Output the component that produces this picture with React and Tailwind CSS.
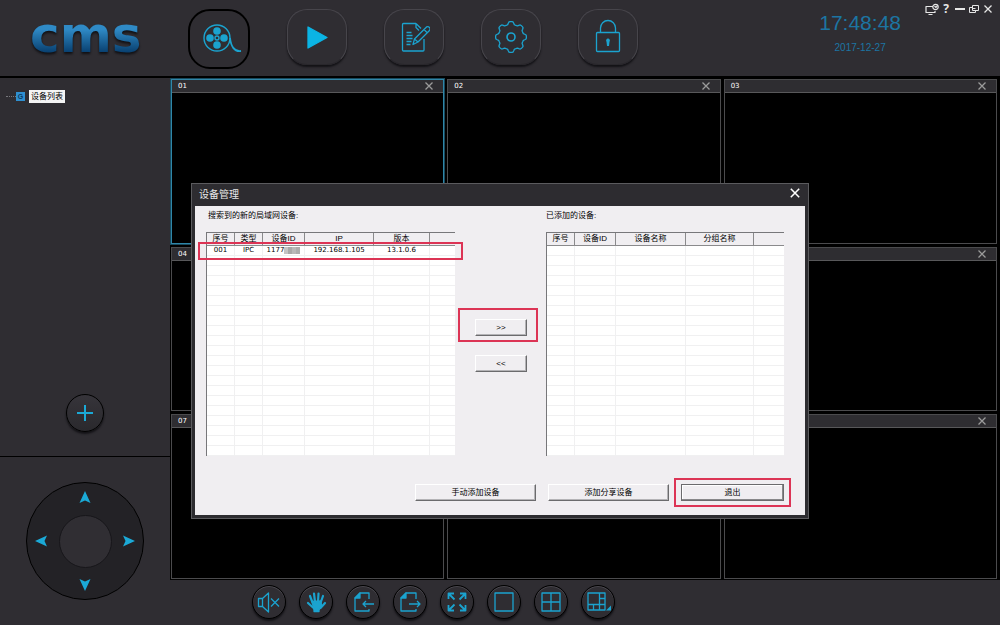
import React, { useState } from "react";

const cameras = ["01", "02", "03", "04", "05", "06", "07", "08", "09"];

const foundDevices = [
  { no: "001", type: "IPC", id: "1177", ip: "192.168.1.105", version: "13.1.0.6" },
];

const ROWS = 21;

const Svg = ({ className, box = "0 0 32 32", sw = 1.3, children }) => (
  <svg
    className={className}
    viewBox={box}
    fill="none"
    stroke="currentColor"
    strokeWidth={sw}
    strokeLinejoin="round"
    aria-hidden="true"
  >
    {children}
  </svg>
);

const Cross = ({ className }) => (
  <Svg className={className} box="0 0 10 10" sw={1.3}>
    <path d="M1.5 1.5l7 7M8.5 1.5l-7 7" />
  </Svg>
);

const FilmIcon = () => (
  <Svg className="size-10 overflow-visible" box="0 0 40 40" sw={1.4}>
    <circle cx="18" cy="19" r="13" />
    <circle cx="18" cy="19" r="2" />
    <g fill="currentColor" stroke="none">
      <circle cx="18" cy="12" r="3.8" />
      <circle cx="18" cy="26" r="3.8" />
      <circle cx="11" cy="19" r="3.8" />
      <circle cx="25" cy="19" r="3.8" />
    </g>
    <path d="M31 19c1 8 4 14 11 13" strokeWidth="1.8" />
  </Svg>
);

const PlayIcon = () => (
  <Svg className="size-8">
    <path d="M7 6v21l19-10.5z" fill="#0bb4e4" stroke="#0bb4e4" />
  </Svg>
);

const NoteIcon = () => (
  <Svg className="size-8">
    <path d="M18 2.5H5.5a1 1 0 0 0-1 1V29a1 1 0 0 0 1 1H25a1 1 0 0 0 1-1V18M18 2.5l5 5M18 2.5v4l3 3" />
    <path d="M8.5 11.5h5M8.5 14.5h6M8.5 17.5h6M8.5 20.5h5M8.5 23.5h4" />
    <path d="M28 6.5a2.2 2.2 0 0 1 3.5 3L20 21l-5 2.5L16.5 18zM26 8.500l3.5 3.5M17 18.5l3 2.5" />
  </Svg>
);

const GearIcon = () => {
  // eight round lobes joined by shallow notches
  let d = "";
  for (let i = 0; i <= 96; i++) {
    const a = (i / 96) * Math.PI * 2;
    const r = 14 + 1.4 * Math.tanh(2.5 * Math.cos(8 * a));
    d += `${i ? "L" : "M"}${(16 + r * Math.cos(a)).toFixed(2)} ${(16 + r * Math.sin(a)).toFixed(2)}`;
  }
  return (
    <Svg className="size-8">
      <path d={d + "z"} />
      <circle cx="16" cy="16" r="4" strokeWidth="1.6" />
    </Svg>
  );
};

const LockIcon = () => (
  <Svg className="size-9" box="0 0 36 36">
    <rect x="6.5" y="13.5" width="23" height="19" rx="1" />
    <path d="M10.5 13.5V9a7.5 7.5 0 0 1 15 0v4.5" />
    <path d="M18 19.5a2 2 0 0 1 1.5 3.2L19 27h-2l-.5-4.300A2 2 0 0 1 18 19.5z" fill="currentColor" stroke="none" />
  </Svg>
);

const navItems = [
  { label: "Preview", icon: <FilmIcon /> },
  { label: "Playback", icon: <PlayIcon /> },
  { label: "Log", icon: <NoteIcon /> },
  { label: "Settings", icon: <GearIcon /> },
  { label: "Lock", icon: <LockIcon /> },
];

const tools = [
  {
    label: "Mute",
    icon: (
      <>
        <path d="M1.5 8.5h4v8h-4zM5.5 8.5l6-5.5v19l-6-5.5" />
        <path d="M14 8.5l8 8M22 8.5l-8 8" />
      </>
    ),
  },
  {
    label: "Talk",
    icon: (
      <g strokeLinecap="round">
        <path d="M8 11.5l9-.5.5 5-2.5 4v1.5h-5V20z" fill="currentColor" />
        <path
          d="M8.500 12.5L6 6M11 12l-1-8.5M14 12l.5-8.5M16.5 13L19 6M9 17.5L4 13M16.5 18l4.5-5"
          strokeWidth="2.2"
        />
      </g>
    ),
  },
  {
    label: "Import",
    icon: (
      <>
        <path d="M18 9V3H9L4 8v13h14v-2" />
        <path d="M4 8l5-5v5z" fill="currentColor" />
        <path d="M23 14H12M15 11l-3 3 3 3" />
      </>
    ),
  },
  {
    label: "Export",
    icon: (
      <>
        <path d="M18 9V3H8L3 8v13h15v-2" />
        <path d="M3 8l5-5v5z" fill="currentColor" />
        <path d="M11 14h11M19 11l3 3-3 3" />
      </>
    ),
  },
  {
    label: "Full screen",
    icon: (
      <path
        d="M3.5 9V3.5H9M3.5 3.5l6 6M20.5 9V3.5H15M20.5 3.5l-6 6M3.5 15v5.5H9M3.5 20.5l6-6M20.5 15v5.5H15M20.5 20.5l-6-6"
        strokeWidth="1.8"
      />
    ),
  },
  { label: "One view", icon: <rect x="3" y="3" width="18" height="18" /> },
  { label: "Four views", icon: <path d="M3 3h18v18H3zM12 3v18M3 12h18" /> },
  {
    label: "More views",
    icon: (
      <>
        <path d="M2 3h17v17H2zM13.5 3v17M2 14.5h17M13.5 8.5H19M7.5 14.5V20" />
        <path d="M25 15.5v5h-5z" fill="currentColor" stroke="none" />
      </>
    ),
  },
];

const Header = () => (
  <header className="flex h-[78px] shrink-0 items-start border-b-2 border-black">
    <div className="w-[188px] shrink-0 pt-[7px] pl-[30px]">
      <h1 className="bg-linear-to-b from-[#2f8ac6] from-40% to-[#0a4272] to-80% bg-clip-text font-['DejaVu_Sans'] text-[50px] leading-[56px] font-bold text-transparent drop-shadow-[0_2px_1px_#101014]">
        cms
      </h1>
    </div>
    <nav className="flex gap-[37px] pt-[9px]">
      {navItems.map((item, i) => (
        <button
          key={item.label}
          aria-label={item.label}
          className={
            i === 0
              ? "flex h-[60px] w-[62px] items-center justify-center rounded-[22px] border-2 border-black text-[#1ba3cf]"
              : "flex h-14 w-[60px] items-center justify-center rounded-[20px] border border-[#47454b] border-b-[#29272c] text-[#1ba3cf] shadow-[0_2px_2px_#131216]"
          }
        >
          {item.icon}
        </button>
      ))}
    </nav>
    <div className="ml-auto flex items-start pr-[5px]">
      <div className="mr-6 pt-3 text-center text-[#1c75a3]">
        <div className="text-[21px] leading-[22px]">17:48:48</div>
        <div className="mt-2 text-[10px] leading-3">2017-12-27</div>
      </div>
      <div className="flex pt-[3px] text-[#e6e6e6]">
        <button aria-label="Display" className="flex h-3 w-[14px] items-center justify-center">
          <Svg className="h-3 w-[14px]" box="0 0 14 12" sw={1.2}>
            <path d="M8 3.5H1v6h9V8M3.5 11.5h4" />
            <circle cx="10.5" cy="4" r="2.7" />
            <path d="M9.5 3l1.5 1.5 1.5-2" />
          </Svg>
        </button>
        <button aria-label="Help" className="h-3 w-[14px] font-['Noto_Sans'] text-xs leading-3 font-bold">
          ?
        </button>
        <button aria-label="Minimize" className="flex h-3 w-[14px] items-center justify-center">
          <span className="h-0.5 w-2.5 bg-[#e6e6e6]" />
        </button>
        <button aria-label="Restore" className="flex h-3 w-[14px] items-center justify-center">
          <Svg className="size-2.5" box="0 0 10 10" sw={1}>
            <path d="M3.5 1.5h6v5h-6zM3.5 3.5h-3v5h6v-2M3.5 4.5h3" />
          </Svg>
        </button>
        <button aria-label="Close" className="flex h-3 w-[14px] items-center justify-center">
          <Cross className="size-2.5" />
        </button>
      </div>
    </div>
  </header>
);

const Arrow = ({ label, className }) => (
  <button aria-label={label} className={className}>
    <svg className="size-3" viewBox="0 0 12 12" fill="#1ba9d6" aria-hidden="true">
      <path d="M6 0l5.5 12L6 9.5.5 12z" />
    </svg>
  </button>
);

const Sidebar = () => (
  <aside className="flex w-[170px] shrink-0 flex-col">
    <div className="flex flex-1 flex-col justify-between border-b border-black pt-3 pb-6">
      <div className="flex items-center pl-1.5">
        <span className="w-2.5 border-t border-dotted border-[#77777c]" />
        <span className="flex size-[9px] items-center justify-center bg-[#2f8fd0] text-[7px] leading-none font-bold text-[#0c3960]">
          G
        </span>
        <span className="ml-1 bg-[#f4f4f4] px-0.5 text-[8px] leading-[13px] text-black">
          设备列表
        </span>
      </div>
      <button
        aria-label="Add"
        className="mx-auto flex size-[38px] items-center justify-center rounded-full border border-black bg-linear-to-b from-[#36343a] to-[#2a292d] text-[#1ba9d6] shadow-[0_2px_2px_#131216]"
      >
        <Svg className="size-4" box="0 0 16 16" sw={2}>
          <path d="M8 0v16M0 8h16" />
        </Svg>
      </button>
    </div>
    <div className="flex h-[168px] justify-center pt-[25px]">
      <div className="grid size-[118px] grid-cols-[28px_1fr_28px] grid-rows-[28px_1fr_28px] place-items-center rounded-full border border-black bg-[#232226]">
        <Arrow label="Up" className="col-start-2" />
        <Arrow label="Left" className="col-start-1 row-start-2 -rotate-90" />
        <span className="col-start-2 row-start-2 size-[53px] rounded-full border border-[#17161a] bg-[#302e33]" />
        <Arrow label="Right" className="col-start-3 row-start-2 rotate-90" />
        <Arrow label="Down" className="col-start-2 row-start-3 rotate-180" />
      </div>
    </div>
  </aside>
);

const Camera = ({ no, active, onSelect }) => (
  <section
    onClick={onSelect}
    className={
      active
        ? "border border-[#2f86a8] bg-black shadow-[0_0_0_1px_#184a5e]"
        : "border border-[#4b4b4d] bg-black"
    }
  >
    <div className="flex h-[13px] items-center justify-between border-b border-[#58585a] bg-[#2e2d31] pr-[9px] pl-1.5">
      <span className="font-['DejaVu_Sans'] text-[7px] leading-3 text-white">{no}</span>
      <button aria-label={`Close ${no}`} className="text-[#9b9b9b]">
        <Cross className="size-2.5" />
      </button>
    </div>
  </section>
);

const Toolbar = () => (
  <footer className="flex h-[45px] shrink-0 items-start gap-[13px] pt-[5px] pl-[82px]">
    {tools.map((tool) => (
      <button
        key={tool.label}
        aria-label={tool.label}
        className="flex size-[34px] items-center justify-center rounded-full border border-black bg-[#2f2d32] text-[#1ba3cf] shadow-[0_2px_2px_#131216,inset_0_1px_0_#4a484e]"
      >
        <Svg className="size-6 overflow-visible" box="0 0 24 24">
          {tool.icon}
        </Svg>
      </button>
    ))}
  </footer>
);

const DeviceTable = ({ label, heads, widths, rows }) => (
  <table
    aria-label={label}
    className="w-full table-fixed border-separate border-spacing-0 border-t border-l border-[#77777a] bg-white text-black"
  >
    <thead>
      <tr>
        {heads.map((head, i) => (
          <th
            key={i}
            className={`${widths[i]} h-[13px] overflow-hidden border-r border-b border-[#8a8a8c] bg-[#f0eef1] p-0 text-[8px] leading-3 font-normal whitespace-nowrap last:border-r-0`}
          >
            {head}
          </th>
        ))}
      </tr>
    </thead>
    <tbody>
      {Array.from({ length: ROWS }, (_, r) => (
        <tr key={r}>
          {heads.map((_, c) => (
            <td
              key={c}
              className="h-2.5 border-r border-b border-[#f0f0f1] p-0 text-center font-['DejaVu_Sans'] text-[7px] leading-[9px] whitespace-nowrap last:border-r-0"
            >
              {rows[r] && rows[r][c]}
            </td>
          ))}
        </tr>
      ))}
    </tbody>
  </table>
);

// device id with its last digits hidden
const MaskedId = ({ id }) => (
  <span className="flex items-center justify-center">
    {id}
    <span className="flex">
      <i className="h-[7px] w-1 bg-[#c4c4c4]" />
      <i className="h-[7px] w-1 bg-[#a9a9a9]" />
      <i className="h-[7px] w-1 bg-[#b9b9b9]" />
      <i className="h-[7px] w-1 bg-[#adadad]" />
    </span>
  </span>
);

const DialogButton = ({ className = "", children }) => (
  <button
    className={`h-[17px] border border-t-white border-r-[#6b6b6d] border-b-[#6b6b6d] border-l-white bg-[#f0eef1] text-[8px] leading-3 text-black shadow-[inset_-1px_-1px_0_#b4b3b6] ${className}`}
  >
    {children}
  </button>
);

const DeviceDialog = ({ onClose }) => {
  const rows = foundDevices.map((d) => [
    d.no,
    d.type,
    <MaskedId id={d.id} />,
    d.ip,
    d.version,
  ]);
  return (
    <div
      role="dialog"
      aria-label="设备管理"
      className="absolute top-[183px] left-1/2 w-[618px] -translate-x-1/2 border border-[#5b5b5e] bg-[#2d2c30] px-[3px] pb-[3px]"
    >
      <div className="flex h-[22px] items-center justify-between px-1">
        <h2 className="text-[10px] leading-4 text-[#e8e8e8]">设备管理</h2>
        <button aria-label="关闭" onClick={onClose} className="mb-1 text-white">
          <Cross className="size-3" />
        </button>
      </div>
      <div className="bg-[#f0eef1] pb-2">
        <div className="flex pl-[11px] text-black">
          <div className="w-[249px]">
            <h3 className="h-[26px] pt-1 pl-0.5 text-[8px] leading-3">
              搜索到的新的局域网设备:
            </h3>
            <div className="relative">
              <DeviceTable
                label="搜索到的新的局域网设备"
                heads={["序号", "类型", "设备ID", "IP", "版本", ""]}
                widths={["w-7", "w-7", "w-[42px]", "w-[69px]", "w-14", "w-[25px]"]}
                rows={rows}
              />
              <div className="pointer-events-none absolute top-2.5 -right-2 -left-2 h-[18px] border-2 border-[#dc3455]" />
            </div>
          </div>
          <div className="flex w-[91px] flex-col gap-[13px] pt-[102px] pl-[3px]">
            <div className="flex h-[34px] w-20 items-end border-2 border-[#dc3455] pb-1 pl-[15px]">
              <DialogButton className="w-[52px]">&gt;&gt;</DialogButton>
            </div>
            <DialogButton className="ml-[17px] w-[52px]">&lt;&lt;</DialogButton>
          </div>
          <div className="w-[238px]">
            <h3 className="h-[26px] pt-1 text-[8px] leading-3">已添加的设备:</h3>
            <DeviceTable
              label="已添加的设备"
              heads={["序号", "设备ID", "设备名称", "分组名称", ""]}
              widths={["w-7", "w-[41px]", "w-[70px]", "w-[68px]", "w-[30px]"]}
              rows={[]}
            />
          </div>
        </div>
        <div className="mt-[22px] flex items-center justify-end pr-[14px]">
          <DialogButton className="mr-3 w-[121px]">手动添加设备</DialogButton>
          <DialogButton className="mr-[5px] w-[121px]">添加分享设备</DialogButton>
          <div className="flex h-[29px] w-[117px] items-center justify-center border-2 border-[#dc3455]">
            <button
              onClick={onClose}
              className="h-[17px] w-[103px] border border-[#6b6b6d] bg-[#f0eef1] text-[8px] leading-3 text-black shadow-[inset_-1px_-1px_0_#88888a,inset_1px_1px_0_#fff]"
            >
              退出
            </button>
          </div>
        </div>
      </div>
    </div>
  );
};

const App = () => {
  const [active, setActive] = useState("01");
  const [open, setOpen] = useState(true);

  return (
    <div className="relative flex h-screen min-h-[600px] flex-col overflow-hidden bg-[#2f2d32] font-['Liberation_Sans','Noto_Sans_CJK_SC',sans-serif]">
      <Header />
      <div className="flex min-h-0 flex-1">
        <Sidebar />
        <div className="flex min-w-0 flex-1 flex-col">
          <main className="grid flex-1 grid-cols-3 grid-rows-3 gap-[3px] bg-black pt-px pr-[3px] pb-px pl-px">
            {cameras.map((no) => (
              <Camera key={no} no={no} active={no === active} onSelect={() => setActive(no)} />
            ))}
          </main>
          <Toolbar />
        </div>
      </div>
      {open && <DeviceDialog onClose={() => setOpen(false)} />}
    </div>
  );
};

export default App;
